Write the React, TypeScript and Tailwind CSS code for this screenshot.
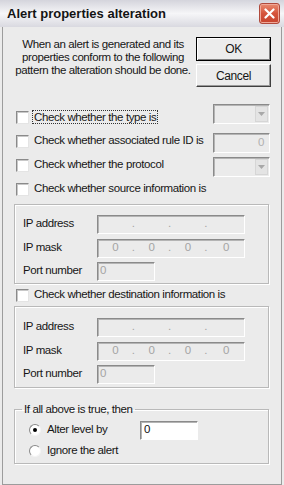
const FONT = "font-['Liberation_Sans',Arial,sans-serif]";

function Checkbox() {
  return (
    <span className="block h-[13px] w-[13px] shrink-0 border border-t-[#8a8a8a] border-l-[#8a8a8a] border-r-[#e4e4e4] border-b-[#e4e4e4] bg-white shadow-[inset_1px_1px_0_#c8c8c8]" />
  );
}

function Radio({ checked = false }: { checked?: boolean }) {
  return (
    <span className="flex h-[12px] w-[12px] shrink-0 items-center justify-center rounded-full border border-t-[#8a8a8a] border-l-[#8a8a8a] border-r-[#f4f4f4] border-b-[#f4f4f4] bg-white">
      {checked && <span className="block h-[4px] w-[4px] rounded-full bg-black" />}
    </span>
  );
}

function Combo({ className = '' }: { className?: string }) {
  return (
    <div
      className={`flex h-[20px] w-[57px] items-center justify-end border border-t-[#8a8a8a] border-l-[#8a8a8a] border-r-white border-b-white bg-[#ebebeb] pr-[1px] shadow-[inset_1px_1px_0_#b4b4b4] ${className}`}
    >
      <span className="flex h-[16px] w-[13px] items-center justify-center border border-[#d6d6d6] bg-[#e4e4e4]">
        <svg width="7" height="4" viewBox="0 0 7 4">
          <path d="M0 0h7L3.5 4z" fill="#a8a8a8" />
        </svg>
      </span>
    </div>
  );
}

function Sunken({ className = '', children }: { className?: string; children?: React.ReactNode }) {
  return (
    <div
      className={`flex h-[19px] items-center border border-t-[#8a8a8a] border-l-[#8a8a8a] border-r-white border-b-white shadow-[inset_1px_1px_0_#b4b4b4] ${className}`}
    >
      {children}
    </div>
  );
}

function IpField({ zeros = false }: { zeros?: boolean }) {
  return (
    <Sunken className="w-[148px] bg-[#ebebeb] pl-[1px] text-[#a4a4a4]">
      {[0, 1, 2, 3].map((i) => (
        <div key={i} className="flex w-[37px] items-center">
          <span className="flex-1 text-center">{zeros ? '0' : ''}</span>
          {i < 3 && <span className="w-[4px] text-center">.</span>}
        </div>
      ))}
    </Sunken>
  );
}

function AddressGroup() {
  return (
    <div className="flex flex-col border border-[#b9b9b9] px-[8px] pb-[1px] pt-[7px] shadow-[inset_1px_1px_0_#fff,1px_1px_0_#fff]">
      <div className="flex h-[24px] items-center">
        <span className="w-[74px]">IP address</span>
        <IpField />
      </div>
      <div className="flex h-[24px] items-center">
        <span className="w-[74px]">IP mask</span>
        <IpField zeros />
      </div>
      <div className="flex h-[22px] items-center">
        <span className="w-[74px]">Port number</span>
        <Sunken className="w-[58px] bg-[#ebebeb] pl-[2px] text-[#a4a4a4]">0</Sunken>
      </div>
    </div>
  );
}

export default function App() {
  return (
    <div className={`${FONT} h-[485px] w-[284px] overflow-hidden bg-[#ebebeb] text-[11.5px] tracking-[-0.4px] text-[#161616]`}>
      {/* title bar */}
      <div className="flex h-[27px] items-center justify-between bg-gradient-to-b from-[#d4d4dc] via-[#f6f6f8] to-[#d9d9e0] pl-[7px] pr-[4px]">
        <span className="text-[13px] font-bold tracking-[0px] text-[#141414]">Alert properties alteration</span>
        <span className="flex h-[21px] w-[21px] items-center justify-center rounded-[3px] border border-[#b04a3c] bg-gradient-to-b from-[#e88a70] via-[#d5533b] to-[#c6452f] shadow-[inset_0_0_0_1px_#f0a898]">
          <svg width="11" height="11" viewBox="0 0 11 11">
            <path d="M1.5 1.5l8 8M9.5 1.5l-8 8" stroke="#fff" strokeWidth="2.2" strokeLinecap="round" />
          </svg>
        </span>
      </div>

      {/* body */}
      <div className="mx-[2px] flex h-[458px] flex-col border-x border-b border-[#9c9c9c] px-[11px]">
        <div className="mt-[10px] flex h-[52px]">
          <p className="flex-1 pt-[1px] pr-[4px] text-center leading-[13px]">
            When an alert is generated and its
            <br />
            properties conform to the following
            <br />
            pattern the alteration should be done.
          </p>
          <div className="mr-[-1px] flex w-[75px] flex-col gap-[3px]">
            <button className="flex h-[24px] items-center justify-center border border-black bg-[#ececec] text-[12px] shadow-[inset_1px_1px_0_#fff,inset_-1px_-1px_0_#808080]">
              OK
            </button>
            <button className="flex h-[23px] items-center justify-center border border-t-white border-l-white border-r-[#404040] border-b-[#404040] bg-[#ececec] text-[12px] shadow-[inset_-1px_-1px_0_#9a9a9a]">
              Cancel
            </button>
          </div>
        </div>

        {/* check rows */}
        <div className="mt-[16px] flex flex-col pl-[2px]">
          <div className="flex h-[24px] items-center">
            <Checkbox />
            <span className="ml-[4px] px-[1px] leading-[12px] outline outline-1 outline-dotted outline-[#333]">Check whether the type is</span>
            <span className="flex-1" />
            <Combo className="-mt-[6px]" />
          </div>
          <div className="flex h-[24px] items-center">
            <Checkbox />
            <span className="ml-[5px]">Check whether associated rule ID is</span>
            <span className="flex-1" />
            <Sunken className="mt-[4px] h-[20px] w-[57px] justify-end bg-[#ebebeb] pr-[5px] text-[#b0b0b0]">0</Sunken>
          </div>
          <div className="flex h-[24px] items-center">
            <Checkbox />
            <span className="ml-[5px]">Check whether the protocol</span>
            <span className="flex-1" />
            <Combo className="mt-[4px]" />
          </div>
          <div className="flex h-[24px] items-center">
            <Checkbox />
            <span className="ml-[5px]">Check whether source information is</span>
          </div>
        </div>

        <div className="mt-[3px] mr-[1px]">
          <AddressGroup />
        </div>

        <div className="flex h-[22px] items-center pl-[2px]">
          <Checkbox />
          <span className="ml-[5px]">Check whether destination information is</span>
        </div>

        <div className="mr-[1px] [&>div]:pt-[8px] [&>div>div:last-child]:mb-[1px]">
          <AddressGroup />
        </div>

        <fieldset className="mt-[14px] mr-[1px] border border-[#b9b9b9] px-[14px] pb-[2px] shadow-[inset_1px_1px_0_#fff,1px_1px_0_#fff]">
          <legend className="ml-[-7px] px-[2px] leading-[14px]">If all above is true, then</legend>
          <div className="mt-[3px] flex h-[22px] items-center">
            <Radio checked />
            <span className="ml-[6px] w-[93px]">Alter level by</span>
            <Sunken className="h-[19px] w-[58px] bg-white pl-[3px] text-[#111]">0</Sunken>
          </div>
          <div className="flex h-[20px] items-center">
            <Radio />
            <span className="ml-[6px]">Ignore the alert</span>
          </div>
        </fieldset>
      </div>
    </div>
  );
}
